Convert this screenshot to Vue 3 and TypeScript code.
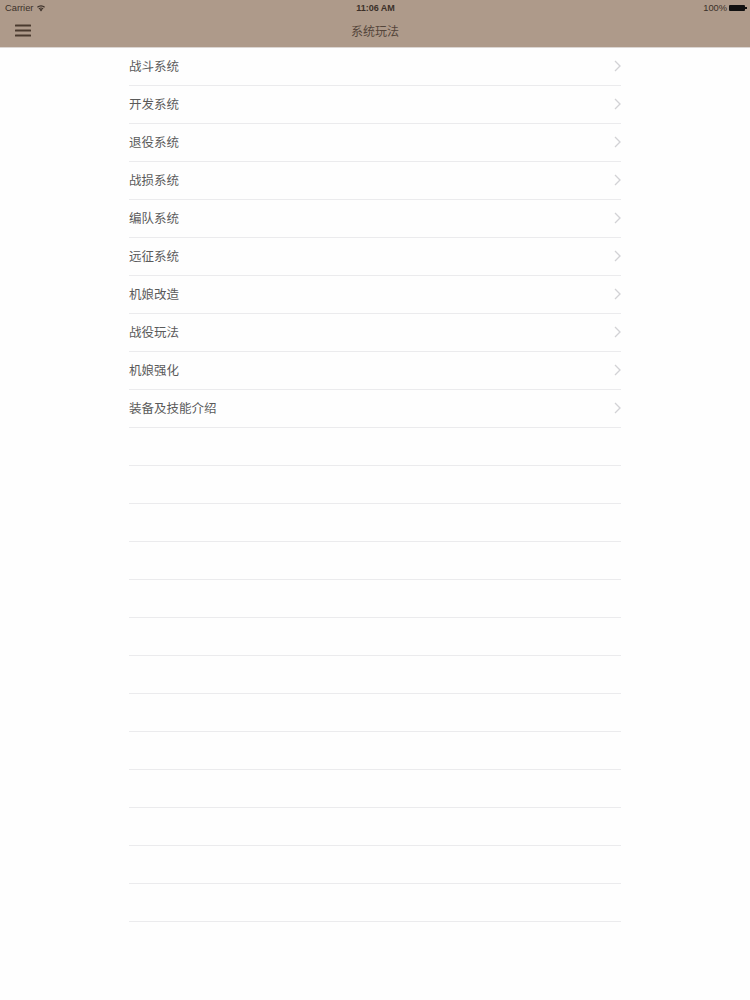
<script setup lang="ts">
const items: string[] = ['战斗系统','开发系统','退役系统','战损系统','编队系统','远征系统','机娘改造','战役玩法','机娘强化','装备及技能介绍'];
const emptyRows: number[] = Array.from({ length: 13 }, (_, i) => i);
</script>

<template>
  <div class="page">
    <header class="top">
      <div class="status">
        <div class="status-left">
          <span>Carrier</span>
          <svg class="wifi" width="10" height="8" viewBox="0 0 10 8">
            <path d="M5 7.6 L3.4 5.6 A2.6 2.6 0 0 1 6.6 5.6 Z" fill="#3b3029" />
            <path d="M2.5 4.5 A4 4 0 0 1 7.5 4.5 L6.9 5.2 A3.2 3.2 0 0 0 3.1 5.2 Z" fill="#3b3029" />
            <path d="M1 2.8 A6 6 0 0 1 9 2.8 L8.2 3.8 A4.9 4.9 0 0 0 1.8 3.8 Z" fill="#3b3029" />
          </svg>
        </div>
        <div class="time">11:06 AM</div>
        <div class="status-right">
          <span>100%</span>
          <span class="battery"><i class="cap"></i></span>
        </div>
      </div>
      <div class="nav">
        <button class="menu" aria-label="menu">
          <svg width="16" height="13" viewBox="0 0 16 13">
            <rect x="0" y="0.5" width="16" height="2" rx="0.5" fill="#4a3a2e" />
            <rect x="0" y="5.5" width="16" height="2" rx="0.5" fill="#4a3a2e" />
            <rect x="0" y="10.5" width="16" height="2" rx="0.5" fill="#4a3a2e" />
          </svg>
        </button>
        <div class="title">系统玩法</div>
      </div>
    </header>
    <main class="list">
      <div v-for="item in items" :key="item" class="row">
        <span class="label">{{ item }}</span>
        <svg class="chev" width="7" height="12" viewBox="0 0 7 12">
          <path d="M1 1 L6 6 L1 11" fill="none" stroke="#d2d2d5" stroke-width="1.3" />
        </svg>
      </div>
      <div v-for="n in emptyRows" :key="n" class="row"></div>
    </main>
  </div>
</template>

<style>
html, body { margin: 0; background: #fff; }
</style>

<style scoped>
.page {
  width: 750px;
  height: 1000px;
  overflow: hidden;
  background: #fefefe;
  font-family: "Liberation Sans", "Noto Sans CJK SC", sans-serif;
}
.top {
  height: 48px;
  background: #ae9a8a;
  border-bottom: 1px solid #dcd6d3;
  box-sizing: border-box;
  display: flex;
  flex-direction: column;
}
.status {
  height: 15px;
  padding: 0 4px 0 5px;
  display: grid;
  grid-template-columns: 1fr auto 1fr;
  align-items: center;
  font-size: 9.3px;
  color: #3b3029;
}
.status-left { display: flex; align-items: center; gap: 3px; }
.time { font-weight: 700; font-size: 9px; color: #3b3029; }
.status-right { display: flex; align-items: center; justify-content: flex-end; gap: 2px; }
.battery {
  position: relative;
  width: 16px;
  height: 6px;
  background: #111;
  border-radius: 1px;
  margin-right: 1px;
}
.cap {
  position: absolute;
  right: -1.5px;
  top: 2px;
  width: 1.5px;
  height: 2px;
  background: #111;
}
.nav {
  position: relative;
  flex: 1;
  display: flex;
  align-items: center;
  justify-content: center;
}
.menu {
  position: absolute;
  left: 15px;
  top: 9px;
  padding: 0;
  border: 0;
  background: none;
  display: flex;
}
.title {
  font-size: 12px;
  color: #54453a;
  margin-bottom: 2px;
}
.list {
  margin: 0 129px;
  display: flex;
  flex-direction: column;
}
.row {
  height: 38px;
  box-sizing: border-box;
  border-bottom: 1px solid #ebebed;
  display: flex;
  align-items: center;
  justify-content: space-between;
}
.label {
  font-size: 12.5px;
  color: #5a5a5a;
  margin-bottom: 2px;
}
.chev { margin-bottom: 1px; }
</style>
